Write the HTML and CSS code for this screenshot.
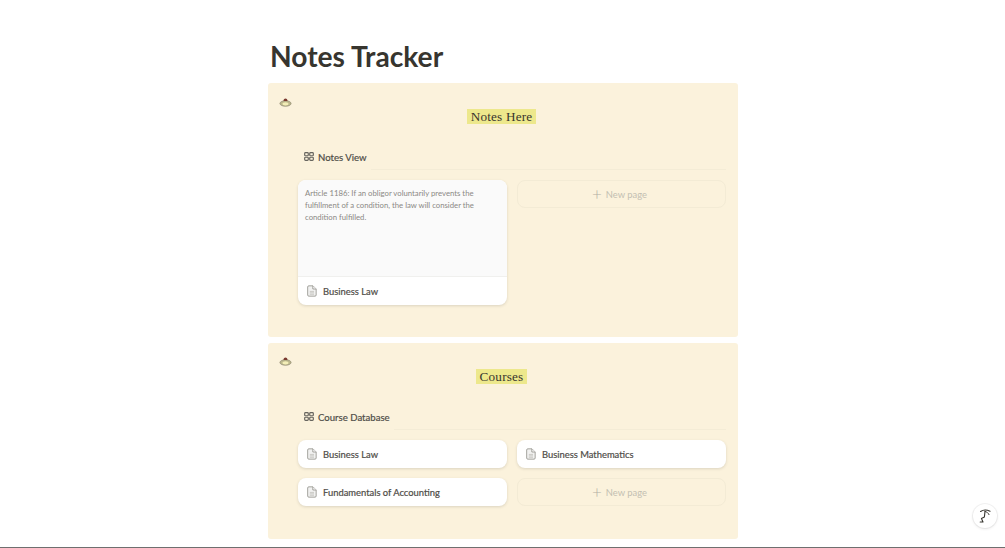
FILE: index.html
```html
<!DOCTYPE html>
<html>
<head>
<meta charset="utf-8">
<title>Notes Tracker</title>
<link rel="stylesheet" href="styles.css">
</head>
<body>
<svg class="defs" width="0" height="0">
  <symbol id="doc" viewBox="0 0 12 14">
    <path d="M2.2 .8h5l3.8 3.8v7.2a1.4 1.4 0 0 1-1.4 1.4H2.2a1.4 1.4 0 0 1-1.4-1.4V2.2A1.4 1.4 0 0 1 2.2 .8z" fill="#f1f1f0" stroke="#93918c" stroke-width="1"/>
    <path d="M7 1v3.6h4" fill="#fff" stroke="#93918c" stroke-width="1"/>
    <path d="M3.4 7.5h5M3.4 9.2h5M3.4 10.9h5" stroke="#bdbcb8" stroke-width=".9"/>
  </symbol>
  <symbol id="gallery" viewBox="0 0 11 10">
    <g fill="none" stroke="#66645e" stroke-width="1.3">
      <rect x=".7" y=".7" width="4" height="3.5" rx=".9"/>
      <rect x="6.3" y=".7" width="4" height="3.5" rx=".9"/>
      <rect x=".7" y="5.8" width="4" height="3.5" rx=".9"/>
      <rect x="6.3" y="5.8" width="4" height="3.5" rx=".9"/>
    </g>
  </symbol>
  <symbol id="pudding" viewBox="0 0 14 10">
    <ellipse cx="7" cy="6.6" rx="6" ry="3" fill="#bdb98c" stroke="#86816a" stroke-width=".7"/>
    <ellipse cx="7" cy="7" rx="3.2" ry="1.7" fill="#f3eeb8"/>
    <path d="M4.8 3.8C5 2 6 1.2 7 1.2s2 .8 2.2 2.6z" fill="#7a3a30"/>
  </symbol>
</svg>

<main class="page">
  <h1 class="title">Notes Tracker</h1>

  <section class="callout first">
    <div class="callout-head">
      <svg class="callout-icon"><use href="#pudding"/></svg>
      <h2 class="callout-title"><mark>Notes Here</mark></h2>
    </div>
    <div class="view">
      <div class="view-tabs">
        <div class="view-tab"><svg class="tab-icon"><use href="#gallery"/></svg>Notes View</div>
      </div>
      <div class="gallery">
        <div class="card">
          <p class="card-preview">Article 1186: If an obligor voluntarily prevents the fulfillment of a condition, the law will consider the condition fulfilled.</p>
          <div class="card-name"><svg class="doc-icon"><use href="#doc"/></svg>Business Law</div>
        </div>
        <div class="new-page"><span class="plus">+</span>New page</div>
      </div>
    </div>
  </section>

  <section class="callout second">
    <div class="callout-head">
      <svg class="callout-icon"><use href="#pudding"/></svg>
      <h2 class="callout-title"><mark>Courses</mark></h2>
    </div>
    <div class="view">
      <div class="view-tabs">
        <div class="view-tab"><svg class="tab-icon"><use href="#gallery"/></svg>Course Database</div>
      </div>
      <div class="gallery">
        <div class="card"><div class="card-name"><svg class="doc-icon"><use href="#doc"/></svg>Business Law</div></div>
        <div class="card"><div class="card-name"><svg class="doc-icon"><use href="#doc"/></svg>Business Mathematics</div></div>
        <div class="card"><div class="card-name"><svg class="doc-icon"><use href="#doc"/></svg>Fundamentals of Accounting</div></div>
        <div class="new-page"><span class="plus">+</span>New page</div>
      </div>
    </div>
  </section>
</main>

<div class="edge"></div>

<button class="help">
  <svg width="14" height="14" viewBox="0 0 14 14">
    <g fill="none" stroke="#37352f" stroke-linecap="round" stroke-linejoin="round">
      <path d="M2.2 13H5L3.4 9.4 6.4 8 7 2.4" stroke-width="1.1"/>
      <path d="M2.6 2.4C5 .8 9 .8 12 2.2" stroke-width="1.2"/>
      <path d="M7 2.4C9 3 10.4 4 11 5.6" stroke-width="1"/>
    </g>
  </svg>
</button>
</body>
</html>
```

FILE: styles.css
```css
html, body {
  margin: 0;
  height: 548px;
  overflow: hidden;
  background: #fff;
  color: #37352f;
  font-family: "Lato", "Liberation Sans", sans-serif;
}
.defs {
  position: absolute;
}
.page {
  width: 470px;
  margin-left: 268px;
  padding-top: 39px;
}
.title {
  margin: 0 0 9px 2px;
  font-size: 28.2px;
  line-height: 35px;
  font-weight: 700;
  color: #37352f;
}
.callout {
  background: #fbf2dc;
  border-radius: 3px;
  padding: 14px 12px 0 11px;
  box-sizing: border-box;
}
.first {
  height: 254px;
  margin-bottom: 6px;
}
.second {
  height: 196px;
}
.second .callout-icon {
  margin-top: -1px;
}
.callout-head {
  display: flex;
  align-items: flex-start;
  padding-right: 16px;
}
.callout-icon {
  width: 13px;
  height: 10px;
  flex: none;
  margin-right: 1px;
}
.callout-title {
  flex: 1;
  margin: 12px 0 0;
  text-align: center;
  font-family: "Liberation Serif", serif;
  font-size: 13.2px;
  line-height: 16px;
  font-weight: 400;
  letter-spacing: .2px;
}
.callout-title mark {
  background: #ede88c;
  color: #37352f;
  padding: 0 4px;
}
.view {
  margin: 21px 0 0 19px;
}
.view-tabs {
  display: flex;
  height: 24px;
}
.view-tabs::after {
  content: "";
  flex: 1;
  border-bottom: 1px solid #f4ecd6;
}
.view-tab {
  display: flex;
  align-items: center;
  padding: 0 4px 2px 6px;
  font-size: 9.6px;
  color: #4f4d48;
  -webkit-text-stroke: .2px #4f4d48;
}
.tab-icon {
  width: 10px;
  height: 9px;
  margin: -2px 4px 0 0;
}
.gallery {
  display: grid;
  grid-template-columns: 209px 209px;
  column-gap: 10px;
  row-gap: 10px;
  align-items: start;
  margin-top: 10px;
}
.card {
  background: #fff;
  border-radius: 8px;
  overflow: hidden;
  box-shadow: 0 1px 3px rgba(55, 53, 47, .16);
}
.card-preview {
  height: 97px;
  margin: 0;
  padding: 7px 7px 0;
  box-sizing: border-box;
  background: #fafafa;
  border-bottom: 1px solid #f0f0ee;
  font-size: 7.75px;
  line-height: 12px;
  color: #8b8985;
}
.card-name {
  display: flex;
  align-items: center;
  height: 28px;
  padding-left: 9px;
  font-size: 9.4px;
  color: #4f4d48;
  -webkit-text-stroke: .2px #4f4d48;
}
.doc-icon {
  width: 10px;
  height: 12px;
  margin-right: 6px;
}
.new-page {
  display: flex;
  align-items: center;
  justify-content: center;
  height: 28px;
  padding-right: 4px;
  box-sizing: border-box;
  border: 1px solid #f3ebd5;
  border-radius: 8px;
  font-size: 9.4px;
  color: #c3bfb2;
}
.plus {
  font-size: 17px;
  line-height: 17px;
  font-weight: 300;
  margin: -2px 4px 0 0;
  color: #b3afa3;
}
.edge {
  position: absolute;
  left: 0;
  right: 0;
  bottom: 0;
  height: 1px;
  background: #6f6f6f;
}
.help {
  position: fixed;
  right: 8px;
  bottom: 20px;
  width: 24px;
  height: 24px;
  padding: 0;
  display: flex;
  align-items: center;
  justify-content: center;
  background: #fff;
  border: 0;
  border-radius: 50%;
  box-shadow: 0 0 0 1px rgba(55, 53, 47, .06), 0 1px 3px rgba(55, 53, 47, .1);
}
```
